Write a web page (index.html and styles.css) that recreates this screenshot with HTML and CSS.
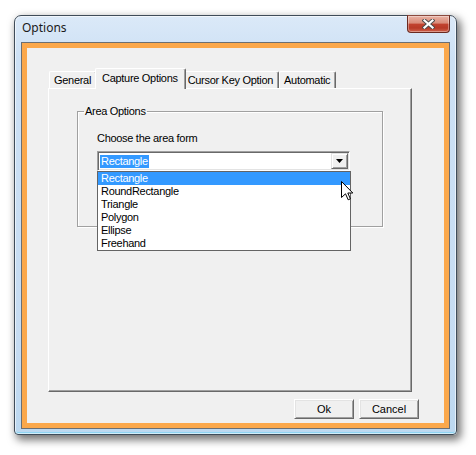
FILE: index.html
```html
<!DOCTYPE html>
<html lang="en">
<head>
    <meta charset="UTF-8">
    <title>Options</title>
    <link rel="stylesheet" href="styles.css">
</head>
<body>
    <div class="window">
        <div class="titlebar">
            <span class="title">Options</span>
            <button class="close" aria-label="Close">
                <svg width="13" height="10" viewBox="0 0 13 10">
                    <path d="M2.5 1.5 L10.5 8.5 M10.5 1.5 L2.5 8.5" stroke="#4a4a4a" stroke-width="4" stroke-linecap="square"/>
                    <path d="M2.5 1.5 L10.5 8.5 M10.5 1.5 L2.5 8.5" stroke="#fff" stroke-width="2.2" stroke-linecap="square"/>
                </svg>
            </button>
        </div>
        <div class="client">
            <div class="content">
                <div class="tabs">
                    <div class="tab">General</div>
                    <div class="tab active">Capture Options</div>
                    <div class="tab">Cursor Key Option</div>
                    <div class="tab">Automatic</div>
                </div>
                <div class="panel">
                    <fieldset class="group">
                        <legend>Area Options</legend>
                        <div class="group-body">
                            <div class="label">Choose the area form</div>
                            <div class="combo">
                                <div class="combo-field"><span class="sel">Rectangle</span></div>
                                <div class="combo-btn">
                                    <svg width="7" height="4" viewBox="0 0 7 4"><path d="M0 0 H7 L3.5 4 Z" fill="#000"/></svg>
                                </div>
                                <ul class="list">
                                    <li class="hi">Rectangle</li>
                                    <li>RoundRectangle</li>
                                    <li>Triangle</li>
                                    <li>Polygon</li>
                                    <li>Ellipse</li>
                                    <li>Freehand</li>
                                </ul>
                                <svg class="cursor" width="13" height="20" viewBox="0 0 13 20">
                                    <path d="M0.5 0.5 V16.5 L4.5 12.8 L7.2 18.8 L9.4 17.8 L6.8 12 H11.8 Z" fill="#fff" stroke="#000" stroke-width="1" stroke-linejoin="miter"/>
                                </svg>
                            </div>
                        </div>
                    </fieldset>
                </div>
                <div class="actions">
                    <button class="btn">Ok</button>
                    <button class="btn">Cancel</button>
                </div>
            </div>
        </div>
    </div>
</body>
</html>
```

FILE: styles.css
```css
html, body {
    margin: 0;
    background: #fff;
}
body {
    width: 476px;
    height: 455px;
    padding: 15px 0 0 14px;
    box-sizing: border-box;
    overflow: hidden;
    font-family: "Liberation Sans", Arial, sans-serif;
    font-size: 11px;
    letter-spacing: -0.3px;
    color: #000;
}
.window {
    width: 443px;
    height: 420px;
    box-sizing: border-box;
    border: 1px solid #3f4c59;
    border-radius: 7px 7px 4px 4px;
    background: linear-gradient(180deg, #dbe9f8 0%, #cde1f5 10%, #c6dcf2 80%, #bcd8f0 100%);
    box-shadow: 3px 4px 9px 1px rgba(0, 0, 0, 0.55), inset 0 0 0 1px rgba(255, 255, 255, 0.6), inset 0 -2px 0 #8fd4f2;
    padding: 0 6px 5px 6px;
    display: flex;
    flex-direction: column;
}
.titlebar {
    height: 26px;
    display: flex;
    align-items: flex-start;
}
.title {
    margin: 4px 0 0 1px;
    font-family: "Noto Sans", "Open Sans", sans-serif;
    font-size: 12px;
    letter-spacing: 0;
    line-height: 16px;
    color: #1a1a1a;
}
.close {
    margin: -1px 0 0 auto;
    width: 43px;
    height: 18px;
    padding: 0;
    border: 1px solid #6a2a20;
    border-top-color: #8a4a3e;
    border-radius: 0 0 4px 4px;
    background: linear-gradient(180deg, #e9b2a4 0%, #d98b78 45%, #c2432f 50%, #b83a27 75%, #d0634d 100%);
    box-shadow: inset 0 0 0 1px rgba(255, 255, 255, 0.35);
    display: flex;
    align-items: center;
    justify-content: center;
}
.close svg {
    display: block;
}
.client {
    flex: 1;
    border: 1px solid #6b6f73;
    display: flex;
}
.content {
    flex: 1;
    border: 5px solid #fba84b;
    background: #f0f0f0;
    padding: 20px 25px 0 21px;
}
.tabs {
    display: flex;
    align-items: flex-end;
    height: 20px;
    padding-left: 1px;
}
.tab {
    height: 17px;
    box-sizing: border-box;
    padding: 2px 5px 0 4px;
    line-height: 13px;
    border: 1px solid #fff;
    border-right-color: #696969;
    border-bottom: none;
    border-radius: 2px 2px 0 0;
    box-shadow: inset -1px 0 #a0a0a0;
    background: #f0f0f0;
}
.tab.active {
    position: relative;
    z-index: 1;
    height: 21px;
    margin: 0 -2px -1px;
    padding: 3px 7px 0 6px;
}
.tab.active + .tab {
    border-left: none;
}
.panel {
    width: 364px;
    height: 304px;
    box-sizing: border-box;
    border: 1px solid #fff;
    border-right-color: #696969;
    border-bottom-color: #696969;
    box-shadow: inset -1px -1px #a0a0a0;
    overflow: hidden;
}
.group {
    width: 306px;
    box-sizing: border-box;
    margin: 15px 0 0 28px;
    padding: 14px 0 55px 0;
    border: 1px solid #a0a0a0;
    box-shadow: 1px 1px 0 #fff, inset 1px 1px 0 #fff;
    min-width: 0;
}
.group legend {
    margin-left: 6px;
    padding: 0 1px;
    line-height: 14px;
}
.group-body {
    padding-left: 19px;
}
.label {
    line-height: 13px;
}
.combo {
    position: relative;
    margin-top: 6px;
    width: 253px;
    height: 20px;
    box-sizing: border-box;
    border: 1px solid;
    border-color: #a0a0a0 #fff #fff #a0a0a0;
    box-shadow: inset 1px 1px #696969, inset -1px -1px #e3e3e3;
    background: #fff;
    padding: 1px;
    display: flex;
}
.combo-field {
    flex: 1;
    display: flex;
    align-items: center;
    padding-left: 1px;
}
.sel {
    background: #3399ff;
    color: #fff;
    padding: 0 1px;
    line-height: 13px;
}
.combo-btn {
    width: 17px;
    height: 16px;
    box-sizing: border-box;
    border: 1px solid;
    border-color: #e3e3e3 #696969 #696969 #e3e3e3;
    box-shadow: inset 1px 1px #fff, inset -1px -1px #a0a0a0;
    background: #f0f0f0;
    display: flex;
    align-items: center;
    justify-content: center;
}
.combo-btn svg {
    display: block;
}
.list {
    position: absolute;
    top: 19px;
    left: -1px;
    width: 254px;
    box-sizing: border-box;
    margin: 0;
    padding: 0;
    list-style: none;
    border: 1px solid #646464;
    background: #fff;
}
.list li {
    line-height: 13px;
    padding-left: 3px;
}
.list li.hi {
    background: #3399ff;
    color: #fff;
}
.cursor {
    position: absolute;
    left: 243px;
    top: 29px;
}
.actions {
    display: flex;
    justify-content: flex-end;
    gap: 5px;
    margin-top: 7px;
}
.btn {
    width: 60px;
    height: 20px;
    padding: 0;
    font: inherit;
    color: #000;
    background: #f0f0f0;
    border: 1px solid;
    border-color: #fff #696969 #696969 #fff;
    box-shadow: inset 1px 1px #e3e3e3, inset -1px -1px #a0a0a0;
}
```
